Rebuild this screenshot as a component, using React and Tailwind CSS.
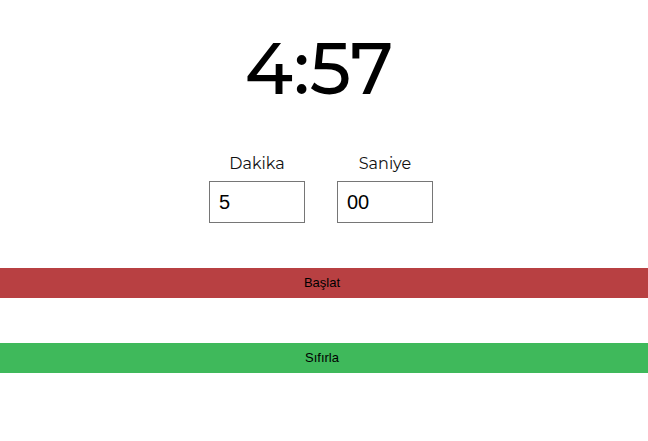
import { useState } from "react";

const HEAD = { fontFamily: "Montserrat, 'DejaVu Sans', sans-serif" };

export default function App() {
  const [min, setMin] = useState("5");
  const [sec, setSec] = useState("00");

  return (
    <main className="min-h-screen bg-white text-black">
      <h1
        className="pt-[23px] pr-[10px] text-center text-[72px] leading-[90px] font-medium"
        style={HEAD}
      >
        4:57
      </h1>

      <div className="mt-[40px] flex justify-center gap-8 pr-[6px]">
        <div className="flex flex-col items-center">
          <label className="text-[16px] leading-[22px] text-[#111]" style={HEAD}>
            Dakika
          </label>
          <input
            value={min}
            onChange={(e) => setMin(e.target.value)}
            className="mt-[6px] h-[42px] w-[96px] border border-[#767676] px-[9px] text-[20px] font-['Liberation_Sans',sans-serif] outline-none"
          />
        </div>
        <div className="flex flex-col items-center">
          <label className="text-[16px] leading-[22px] text-[#111]" style={HEAD}>
            Saniye
          </label>
          <input
            value={sec}
            onChange={(e) => setSec(e.target.value)}
            className="mt-[6px] h-[42px] w-[96px] border border-[#767676] px-[9px] text-[20px] font-['Liberation_Sans',sans-serif] outline-none"
          />
        </div>
      </div>

      <button className="mt-[45px] block h-[30px] w-full bg-[#b84042] pr-[4px] text-[13px] text-black font-['Liberation_Sans',sans-serif]">
        Başlat
      </button>
      <button className="mt-[45px] block h-[30px] w-full bg-[#3fb95b] pr-[4px] text-[13px] text-black font-['Liberation_Sans',sans-serif]">
        Sıfırla
      </button>
    </main>
  );
}
